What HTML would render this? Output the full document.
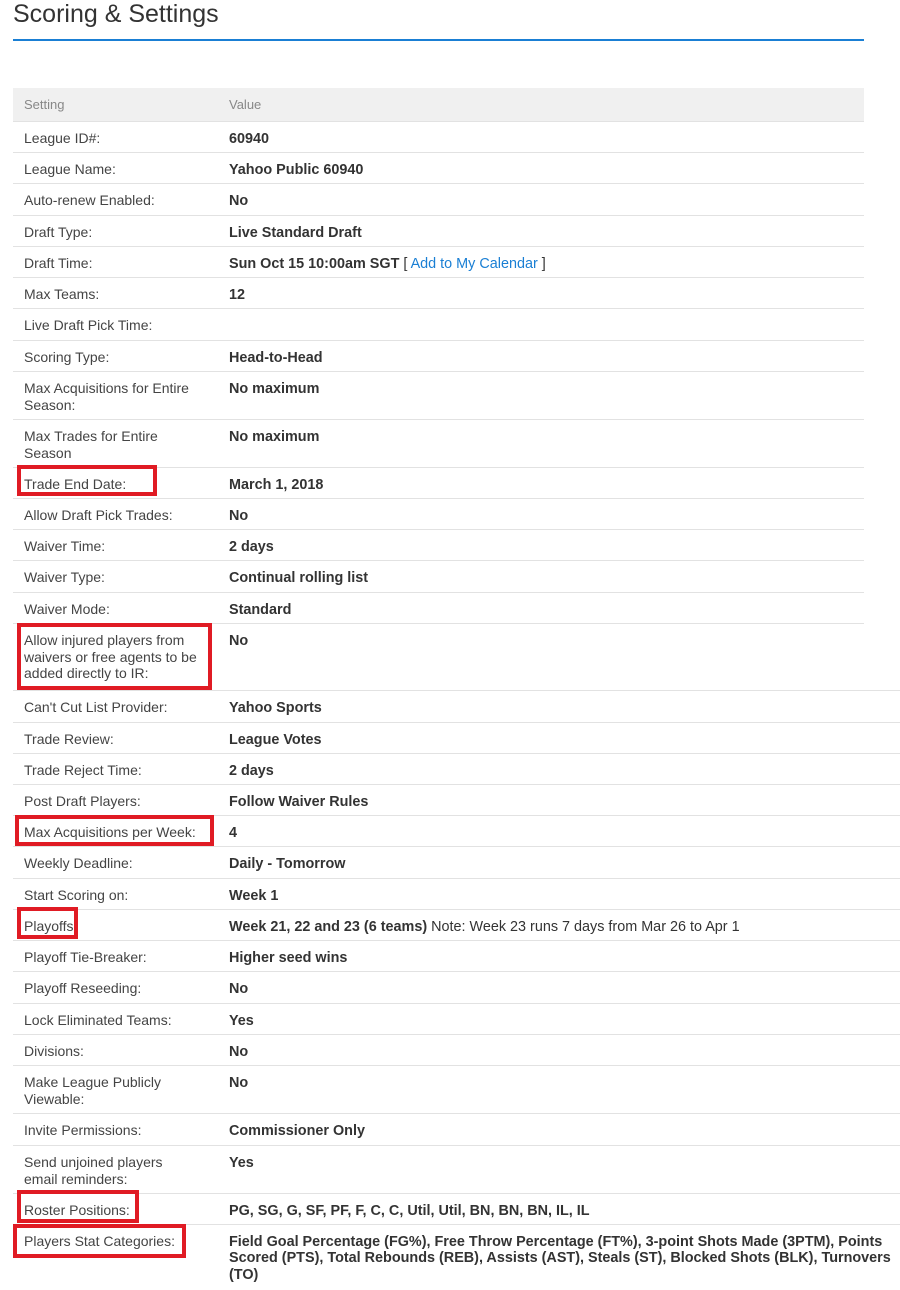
<!DOCTYPE html>
<html><head><meta charset="utf-8"><style>
body{margin:0;width:900px;height:1290px;background:#fff;font-family:"Liberation Sans",Arial,sans-serif;position:relative;overflow:hidden;color:#333}
h1{position:absolute;left:13px;top:0px;margin:0;font-weight:normal;font-size:25px;color:#333}
.bl{position:absolute;left:13px;top:39px;width:851px;height:2px;background:#1a7fd4}
.r{position:absolute;left:13px;width:851px;border-top:1px solid #e2e2e2;font-size:14.4px;line-height:16.5px}
.r.w{width:887px}
.l{position:absolute;left:11px;top:8px;width:175px;color:#444;font-size:14px;line-height:16.5px}
.v{position:absolute;left:216px;top:8.5px;font-weight:bold;color:#333;width:670px}
.v a{color:#1a7fd4;font-weight:normal;text-decoration:none}
.h{background:#f0f0f0;border:none}
.h .l,.h .v{color:#888;font-weight:normal;font-size:13px;top:9px}
.n{font-weight:normal}
.box{position:absolute;border:4px solid #e01b24}
</style></head><body>
<h1>Scoring &amp; Settings</h1>
<div class="bl"></div>

<div class="r h" style="top:88px;height:33px"><div class="l">Setting</div><div class="v">Value</div></div>
<div class="r" style="top:121px"><div class="l">League ID#:</div><div class="v">60940</div></div>
<div class="r" style="top:152px"><div class="l">League Name:</div><div class="v">Yahoo Public 60940</div></div>
<div class="r" style="top:183px"><div class="l">Auto-renew Enabled:</div><div class="v">No</div></div>
<div class="r" style="top:215px"><div class="l">Draft Type:</div><div class="v">Live Standard Draft</div></div>
<div class="r" style="top:246px"><div class="l">Draft Time:</div><div class="v">Sun Oct 15 10:00am SGT <span class="n">[ <a>Add to My Calendar</a> ]</span></div></div>
<div class="r" style="top:277px"><div class="l">Max Teams:</div><div class="v">12</div></div>
<div class="r" style="top:308px"><div class="l">Live Draft Pick Time:</div><div class="v"></div></div>
<div class="r" style="top:340px"><div class="l">Scoring Type:</div><div class="v">Head-to-Head</div></div>
<div class="r" style="top:371px"><div class="l">Max Acquisitions for Entire Season:</div><div class="v">No maximum</div></div>
<div class="r" style="top:419px"><div class="l">Max Trades for Entire Season</div><div class="v">No maximum</div></div>
<div class="r" style="top:467px"><div class="l">Trade End Date:</div><div class="v">March 1, 2018</div></div>
<div class="r" style="top:498px"><div class="l">Allow Draft Pick Trades:</div><div class="v">No</div></div>
<div class="r" style="top:529px"><div class="l">Waiver Time:</div><div class="v">2 days</div></div>
<div class="r" style="top:560px"><div class="l">Waiver Type:</div><div class="v">Continual rolling list</div></div>
<div class="r" style="top:592px"><div class="l">Waiver Mode:</div><div class="v">Standard</div></div>
<div class="r" style="top:623px"><div class="l" style="width:185px">Allow injured players from waivers or free agents to be added directly to IR:</div><div class="v">No</div></div>
<div class="r w" style="top:690px"><div class="l">Can't Cut List Provider:</div><div class="v">Yahoo Sports</div></div>
<div class="r w" style="top:722px"><div class="l">Trade Review:</div><div class="v">League Votes</div></div>
<div class="r w" style="top:753px"><div class="l">Trade Reject Time:</div><div class="v">2 days</div></div>
<div class="r w" style="top:784px"><div class="l">Post Draft Players:</div><div class="v">Follow Waiver Rules</div></div>
<div class="r w" style="top:815px"><div class="l" style="width:200px">Max Acquisitions per Week:</div><div class="v">4</div></div>
<div class="r w" style="top:846px"><div class="l">Weekly Deadline:</div><div class="v">Daily - Tomorrow</div></div>
<div class="r w" style="top:878px"><div class="l">Start Scoring on:</div><div class="v">Week 1</div></div>
<div class="r w" style="top:909px"><div class="l">Playoffs:</div><div class="v">Week 21, 22 and 23 (6 teams) <span class="n">Note: Week 23 runs 7 days from Mar 26 to Apr 1</span></div></div>
<div class="r w" style="top:940px"><div class="l">Playoff Tie-Breaker:</div><div class="v">Higher seed wins</div></div>
<div class="r w" style="top:971px"><div class="l">Playoff Reseeding:</div><div class="v">No</div></div>
<div class="r w" style="top:1003px"><div class="l">Lock Eliminated Teams:</div><div class="v">Yes</div></div>
<div class="r w" style="top:1034px"><div class="l">Divisions:</div><div class="v">No</div></div>
<div class="r w" style="top:1065px"><div class="l">Make League Publicly Viewable:</div><div class="v">No</div></div>
<div class="r w" style="top:1113px"><div class="l">Invite Permissions:</div><div class="v">Commissioner Only</div></div>
<div class="r w" style="top:1145px"><div class="l" style="width:160px">Send unjoined players email reminders:</div><div class="v">Yes</div></div>
<div class="r w" style="top:1193px"><div class="l">Roster Positions:</div><div class="v">PG, SG, G, SF, PF, F, C, C, Util, Util, BN, BN, BN, IL, IL</div></div>
<div class="r w" style="top:1224px"><div class="l" style="width:200px">Players Stat Categories:</div><div class="v">Field Goal Percentage (FG%), Free Throw Percentage (FT%), 3-point Shots Made (3PTM), Points Scored (PTS), Total Rebounds (REB), Assists (AST), Steals (ST), Blocked Shots (BLK), Turnovers (TO)</div></div>

<div class="box" style="left:17px;top:465px;width:132px;height:23px"></div>
<div class="box" style="left:17px;top:623px;width:187px;height:59px"></div>
<div class="box" style="left:15px;top:815px;width:191px;height:23px"></div>
<div class="box" style="left:17px;top:907px;width:53px;height:24px"></div>
<div class="box" style="left:17px;top:1190px;width:114px;height:25px"></div>
<div class="box" style="left:13px;top:1224px;width:165px;height:26px"></div>
</body></html>
